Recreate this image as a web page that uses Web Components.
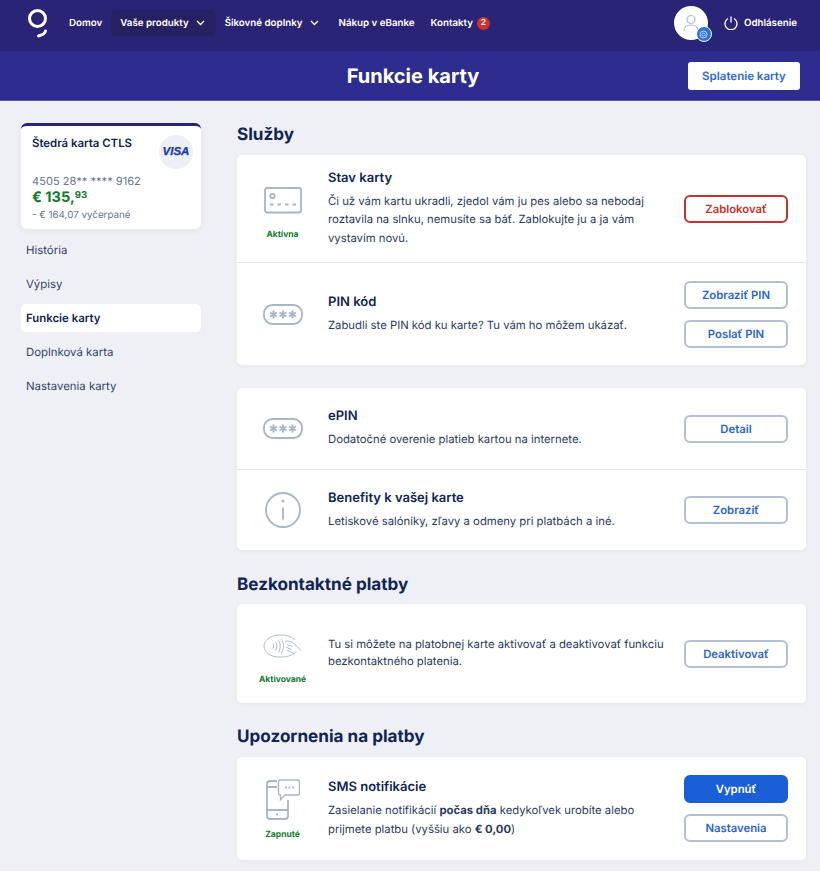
<!DOCTYPE html>
<html lang="sk">
<head>
<meta charset="utf-8">
<title>Funkcie karty</title>
<style>
  html, body { margin: 0; padding: 0; background: #eff0f5; }
  body { font-family: Inter, "Noto Sans", sans-serif; color: #0f2557; height: 871px; overflow: hidden; text-rendering: geometricPrecision; }
  svg { display: block; }
  .line { display: block; }
</style>
</head>
<body>
<app-nav></app-nav>
<page-title heading="Funkcie karty" action="Splatenie karty"></page-title>

<page-layout>
  <div slot="side">
    <card-summary></card-summary>
    <side-menu></side-menu>
  </div>

  <section-title style="margin-top: 0">Služby</section-title>
  <service-card>
    <service-row heading="Stav karty" status="Aktívna" style="--h: 107px; --g: 16px; --p: 11px">
      <svg slot="icon" width="38" height="27" viewBox="0 0 38 27" fill="none" stroke="#a9b6c9" stroke-width="1.800"><rect x="1" y="1" width="36" height="24.500" rx="2"/><circle cx="8.500" cy="9" r="2.200"/><path d="M6 17.500h3.500M13.500 17.500h3.500M21 17.500h3.500M28.500 17.500h3.500"/></svg>
      Či už vám kartu ukradli, zjedol vám ju pes alebo sa nebodaj roztavila na slnku, nemusíte sa báť. Zablokujte ju a ja vám vystavím novú.
      <action-button slot="actions" variant="danger">Zablokovať</action-button>
    </service-row>
    <service-row heading="PIN kód" style="--h: 103px">
      <pin-icon slot="icon"></pin-icon>
      Zabudli ste PIN kód ku karte? Tu vám ho môžem ukázať.
      <action-button slot="actions">Zobraziť PIN</action-button>
      <action-button slot="actions">Poslať PIN</action-button>
    </service-row>
  </service-card>

  <service-card style="margin-top: 23px">
    <service-row heading="ePIN" style="--h: 81px">
      <pin-icon slot="icon"></pin-icon>
      Dodatočné overenie platieb kartou na internete.
      <action-button slot="actions">Detail</action-button>
    </service-row>
    <service-row heading="Benefity k vašej karte" style="--h: 81px">
      <svg slot="icon" width="36" height="36" viewBox="0 0 36 36" fill="none" stroke="#a9b6c9" stroke-width="1.800"><circle cx="18" cy="18" r="17"/><path d="M18 15.500v12"/><circle cx="18" cy="9" r="1.500" fill="#a9b6c9" stroke="none"/></svg>
      Letiskové salóniky, zľavy a odmeny pri platbách a iné.
      <action-button slot="actions">Zobraziť</action-button>
    </service-row>
  </service-card>

  <section-title style="margin: 23px 0 9px">Bezkontaktné platby</section-title>
  <service-card>
    <service-row status="Aktivované" style="--h: 99px; --g: 17px; --p: 12px; --lh: 17px; --tb: 2px">
      <svg slot="icon" width="41" height="24" viewBox="0 0 42 26" fill="none" stroke="#a9b6c9" stroke-width="1"><path d="M36 19c-4 4-11 6.500-18 6C8 25 1 20 1 13 1 6 9 1 19 1c6 0 11 1.500 15 5"/><path d="M10.500 10.500c1 1.500 1 3.500 0 5M13.500 9c1.800 2.500 1.800 6 0 8.500M16.500 7c2.800 4 2.800 9 0 13M19.500 5.500c3.500 4.500 3.500 11 0 15.500"/><path d="M24 8c3-1 7 0 9 2l8 8M26 11.500l6 2M24.500 14l6 2.500M25.500 17.500l4 2c2 1 4 1 5 3"/></svg>
      Tu si môžete na platobnej karte aktivovať a deaktivovať funkciu bezkontaktného platenia.
      <action-button slot="actions">Deaktivovať</action-button>
    </service-row>
  </service-card>

  <section-title style="margin: 22px 0 10px">Upozornenia na platby</section-title>
  <service-card>
    <service-row heading="SMS notifikácie" status="Zapnuté" style="--h: 103px; --g: 10px; --p: 2px">
      <svg slot="icon" width="34" height="41" viewBox="0 0 34 41" fill="none" stroke="#a9b6c9" stroke-width="1.800"><path d="M11 2H4a3 3 0 0 0-3 3v32a3 3 0 0 0 3 3h15a3 3 0 0 0 3-3V21"/><path d="M1 31h21M1 8h10"/><path d="M14 1h18a1.500 1.500 0 0 1 1.500 1.500v12A1.500 1.500 0 0 1 32 16H19l-4.500 4.500V16H14a1.500 1.500 0 0 1-1.500-1.500v-12A1.500 1.500 0 0 1 14 1z" stroke-width="1.400"/><path d="M19 8.500h1.800M22.500 8.500h1.800M26 8.500h1.800" stroke-width="1.800"/><path d="M10 35.500h2" stroke-width="2"/></svg>
      <span class="line">Zasielanie notifikácií <b>počas dňa</b> kedykoľvek urobíte alebo</span>
      <span class="line">prijmete platbu (vyššiu ako <b>€ 0,00</b>)</span>
      <action-button slot="actions" variant="primary">Vypnúť</action-button>
      <action-button slot="actions">Nastavenia</action-button>
    </service-row>
  </service-card>
</page-layout>

<script>
class AppNav extends HTMLElement {
  constructor() {
    super();
    this.attachShadow({ mode: 'open' });
    const chev = '<svg width="9" height="6" viewBox="0 0 9 6" fill="none" stroke="#fff" stroke-width="1.300"><path d="M1 1l3.500 3.500L8 1"/></svg>';
    this.shadowRoot.innerHTML = `
      <style>
        :host { display: flex; align-items: center; height: 51px; background: #2a2477; padding: 0 23px 5px 28px; color: #fff; font-size: 9.750px; font-weight: 600; box-sizing: border-box; }
        .logo { width: 23px; height: 31px; margin-right: 9px; align-self: flex-start; margin-top: 8px; }
        a { display: flex; align-items: center; gap: 7px; height: 26px; padding: 0 9px; border-radius: 6px; white-space: nowrap; color: #fff; }
        a svg { margin-right: 2px; }
        a.on { background: #262163; }
        a.end { margin-left: -2px; gap: 4px; }
        .badge { display: inline-block; width: 13px; height: 13px; line-height: 13px; border-radius: 50%; background: #d1302b; text-align: center; font-size: 8.500px; }
        .push { flex: 1; }
        .avatar { position: relative; width: 34px; height: 34px; border-radius: 50%; background: #fff; margin-right: 16px; display: flex; align-items: center; justify-content: center; }
        .dot { position: absolute; left: 22px; top: 20px; width: 16px; height: 16px; border-radius: 50%; background: #2f73e0; border: 1px solid #fff; box-sizing: border-box; display: flex; align-items: center; justify-content: center; }
        .out { display: flex; align-items: center; gap: 6px; }
      </style>
      <div class="logo">
        <svg width="20" height="31" viewBox="0 0 20 31" fill="none" stroke="#fff" stroke-width="3"><circle cx="9.500" cy="10.500" r="8"/><path d="M17.500 23c-.500 2.500-3 4-7 5" stroke-linecap="round"/></svg>
      </div>
      <a>Domov</a>
      <a class="on">Vaše produkty ${chev}</a>
      <a>Šikovné doplnky ${chev}</a>
      <a>Nákup v eBanke</a>
      <a class="end">Kontakty <span class="badge">2</span></a>
      <span class="push"></span>
      <div class="avatar">
        <svg width="16" height="18" viewBox="0 0 16 18" fill="none" stroke="#b3bccb" stroke-width="1.200"><circle cx="8" cy="5.500" r="4"/><path d="M1 17c0-4 3-6 7-6s7 2 7 6"/></svg>
        <span class="dot"><svg width="9" height="9" viewBox="0 0 9 9" fill="none" stroke="#bcd3f7" stroke-width="1"><circle cx="4.500" cy="4.500" r="3.500"/><circle cx="4.500" cy="4.500" r="1.500"/></svg></span>
      </div>
      <div class="out">
        <svg width="14" height="14" viewBox="0 0 14 14" fill="none" stroke="#fff" stroke-width="1.300"><path d="M4 2.500a6 6 0 1 0 6 0"/><path d="M7 .500v6"/></svg>
        Odhlásenie
      </div>`;
  }
}
customElements.define('app-nav', AppNav);

class PageTitle extends HTMLElement {
  constructor() {
    super();
    this.attachShadow({ mode: 'open' });
    this.shadowRoot.innerHTML = `
      <style>
        :host { display: flex; align-items: center; justify-content: center; position: relative; height: 50px; padding-left: 6px; box-sizing: border-box; background: #2e2d8f; border-bottom: 1px solid #5a5aa0; }
        h1 { margin: 0; color: #fff; font-size: 20px; font-weight: 700; }
        button { position: absolute; left: 688px; top: 11px; width: 112px; height: 28px; border: 0; border-radius: 3px; background: #fff; color: #2f6ad9; font: 600 11.500px Inter, sans-serif; padding: 0; text-rendering: geometricPrecision; }
      </style>
      <h1></h1><button></button>`;
  }
  connectedCallback() {
    this.shadowRoot.querySelector('h1').textContent = this.getAttribute('heading');
    this.shadowRoot.querySelector('button').textContent = this.getAttribute('action');
  }
}
customElements.define('page-title', PageTitle);

class PageLayout extends HTMLElement {
  constructor() {
    super();
    this.attachShadow({ mode: 'open' });
    this.shadowRoot.innerHTML = `
      <style>
        :host { display: grid; grid-template-columns: 180px 569px; column-gap: 36px; padding: 22px 14px 0 21px; }
      </style>
      <aside><slot name="side"></slot></aside>
      <main><slot></slot></main>`;
  }
}
customElements.define('page-layout', PageLayout);

class CardSummary extends HTMLElement {
  constructor() {
    super();
    this.attachShadow({ mode: 'open' });
    this.shadowRoot.innerHTML = `
      <style>
        :host { display: block; height: 106px; box-sizing: border-box; background: #fff; border-top: 3px solid #2a2477; border-radius: 6px; padding: 9px 11px 0 11px; position: relative; box-shadow: 0 2px 6px rgba(40,50,90,.06); }
        .name { font-size: 11.400px; font-weight: 600; line-height: 16px; color: #0f2557; }
        .visa { position: absolute; right: 8px; top: 9px; width: 34px; height: 34px; border-radius: 50%; background: #eff0f5; display: flex; align-items: center; justify-content: center; color: #1a3db0; font: italic 700 11.500px "Liberation Sans", sans-serif; -webkit-text-stroke: .3px #1a3db0; }
        .num { margin-top: 22px; font-size: 11.100px; line-height: 16px; color: #69768f; }
        .sum { font-size: 14.500px; line-height: 18px; font-weight: 700; color: #117a2c; }
        sup { font-size: 9.500px; line-height: 0; vertical-align: 4px; }
        .used { margin-top: 2px; font-size: 9.800px; line-height: 14px; color: #69768f; }
      </style>
      <div class="name">Štedrá karta CTLS</div>
      <div class="visa">VISA</div>
      <div class="num">4505 28** **** 9162</div>
      <div class="sum">€ 135,<sup>93</sup></div>
      <div class="used">- € 164,07 vyčerpané</div>`;
  }
}
customElements.define('card-summary', CardSummary);

class SideMenu extends HTMLElement {
  constructor() {
    super();
    this.attachShadow({ mode: 'open' });
    const items = ['História', 'Výpisy', 'Funkcie karty', 'Doplnková karta', 'Nastavenia karty'];
    this.shadowRoot.innerHTML = `
      <style>
        :host { display: flex; flex-direction: column; gap: 6px; margin-top: 7px; }
        div { height: 28px; line-height: 28px; padding-left: 5px; border-radius: 5px; font-size: 11.400px; color: #34436a; }
        .on { background: #fff; font-weight: 600; color: #0f2557; }
      </style>
      ${items.map((t, i) => `<div class="${i == 2 ? 'on' : ''}">${t}</div>`).join('')}`;
  }
}
customElements.define('side-menu', SideMenu);

class SectionTitle extends HTMLElement {
  constructor() {
    super();
    this.attachShadow({ mode: 'open' });
    this.shadowRoot.innerHTML = `
      <style>
        :host { display: block; padding-top: 1px; font-size: 17.100px; font-weight: 700; line-height: 21px; color: #0f2557; margin: 0 0 10px; }
      </style>
      <slot></slot>`;
  }
}
customElements.define('section-title', SectionTitle);

class ServiceCard extends HTMLElement {
  constructor() {
    super();
    this.attachShadow({ mode: 'open' });
    this.shadowRoot.innerHTML = `
      <style>
        :host { display: block; background: #fff; border-radius: 5px; box-shadow: 0 1px 4px rgba(40,50,90,.05); }
        ::slotted(service-row:not(:first-child)) { border-top: 1px solid #e3e5ea; }
      </style>
      <slot></slot>`;
  }
}
customElements.define('service-card', ServiceCard);

class ServiceRow extends HTMLElement {
  constructor() {
    super();
    this.attachShadow({ mode: 'open' });
    this.shadowRoot.innerHTML = `
      <style>
        :host { display: grid; grid-template-columns: 91px 1fr 122px; align-items: center; height: var(--h); box-sizing: border-box; }
        .icon { display: flex; flex-direction: column; align-items: center; padding-top: var(--p, 0); }
        .status { margin-top: var(--g, 10px); font-size: 8.500px; line-height: 11px; font-weight: 700; color: #117a2c; }
        .text { padding-bottom: var(--tb, 0); }
        h3 { margin: 0 0 5px; font-size: 13px; line-height: 17px; font-weight: 600; color: #0f2557; }
        p { margin: 0; font-size: 11.300px; line-height: var(--lh, 18.500px); color: #2b3a63; max-width: 345px; }
        .actions { display: flex; flex-direction: column; gap: 11px; }
      </style>
      <div class="icon"><slot name="icon"></slot><span class="status"></span></div>
      <div class="text"><h3></h3><p><slot></slot></p></div>
      <div class="actions"><slot name="actions"></slot></div>`;
  }
  connectedCallback() {
    const root = this.shadowRoot;
    const heading = this.getAttribute('heading');
    const status = this.getAttribute('status');
    if (heading) root.querySelector('h3').textContent = heading; else root.querySelector('h3').remove();
    if (status) root.querySelector('.status').textContent = status; else root.querySelector('.status').remove();
  }
}
customElements.define('service-row', ServiceRow);

class PinIcon extends HTMLElement {
  constructor() {
    super();
    this.attachShadow({ mode: 'open' });
    this.shadowRoot.innerHTML = `
      <style>:host { display: block; }</style>
      <svg width="40" height="21" viewBox="0 0 40 21" fill="none" stroke="#a9b6c9" stroke-width="1.800" style="display:block">
        <rect x="1" y="1" width="38" height="19" rx="8.500"/>
        <g stroke-width="2"><path d="M10.500 6.500v8M7 8.500l7 4M14 8.500l-7 4"/><path d="M20 6.500v8M16.500 8.500l7 4M23.500 8.500l-7 4"/><path d="M29.500 6.500v8M26 8.500l7 4M33 8.500l-7 4"/></g>
      </svg>`;
  }
}
customElements.define('pin-icon', PinIcon);

class ActionButton extends HTMLElement {
  constructor() {
    super();
    this.attachShadow({ mode: 'open' });
    this.shadowRoot.innerHTML = `
      <style>
        :host { display: flex; align-items: center; justify-content: center; width: 104px; height: 28px; box-sizing: border-box; border: 2px solid #b2c0d2; border-radius: 6px; background: #fff; color: #2a66cf; font-size: 11.300px; font-weight: 600; }
        :host([variant="danger"]) { border-color: #c7322c; color: #c7322c; }
        :host([variant="primary"]) { background: #1a5fd8; border-color: #1a5fd8; color: #fff; }
      </style>
      <slot></slot>`;
  }
}
customElements.define('action-button', ActionButton);
</script>
</body>
</html>
